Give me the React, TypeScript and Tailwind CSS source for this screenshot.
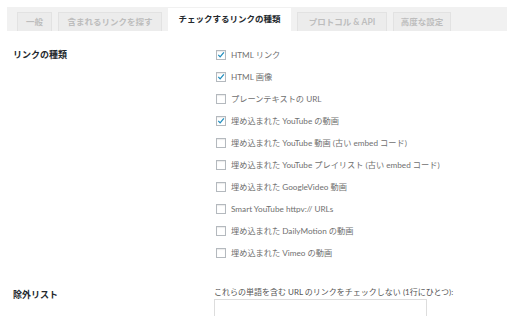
import React from "react";

const tabs = [
  { label: "一般", w: "w-[35px]" },
  { label: "含まれるリンクを探す", w: "w-[104px]" },
  { label: "チェックするリンクの種類", w: "w-[123px]", active: true },
  { label: "プロトコル & API", w: "w-[90px]" },
  { label: "高度な設定", w: "w-[58px]" },
];

const linkTypes = [
  { text: "HTML リンク", checked: true },
  { text: "HTML 画像", checked: true },
  { text: "プレーンテキストの URL", checked: false },
  { text: "埋め込まれた YouTube の動画", checked: true },
  { text: "埋め込まれた YouTube 動画 (古い embed コード)", checked: false },
  { text: "埋め込まれた YouTube プレイリスト (古い embed コード)", checked: false },
  { text: "埋め込まれた GoogleVideo 動画", checked: false },
  { text: "Smart YouTube httpv:// URLs", checked: false },
  { text: "埋め込まれた DailyMotion の動画", checked: false },
  { text: "埋め込まれた Vimeo の動画", checked: false },
];

const CheckBox = ({ checked }: { checked: boolean }) => (
  <span className="flex size-[10px] shrink-0 items-center justify-center border border-[#b4b9be] bg-white shadow-[inset_0_1px_1px_rgba(0,0,0,0.08)]">
    {checked && (
      <svg viewBox="0 0 10 10" className="size-[10px]">
        <path d="M1.6 4.9 L3.9 7.3 L8.6 1.8" fill="none" stroke="#1e8cbe" strokeWidth="1.6" />
      </svg>
    )}
  </span>
);

export default function App() {
  return (
    <div
      className="h-[316px] w-[514px] overflow-hidden bg-white text-[#707070]"
      style={{ fontFamily: 'Lato, "Noto Sans CJK JP", sans-serif' }}
    >
      <div className="px-[7px] pt-[7px]">
        <div className="flex h-[24px] items-end gap-[6px] bg-[#f1f1f1] pl-[10px]">
          {tabs.map((t) =>
            t.active ? (
              <div
                key={t.label}
                className={`flex h-[23px] ${t.w} items-center justify-center bg-white text-[8.5px] font-bold text-[#23282d]`}
              >
                {t.label}
              </div>
            ) : (
              <div
                key={t.label}
                className={`flex h-[19px] ${t.w} items-center justify-center border border-b-0 border-[#e2e2e2] bg-[#ececec] text-[8.5px] font-bold text-[#bdbdbd]`}
              >
                {t.label}
              </div>
            )
          )}
        </div>
      </div>

      <div className="mt-[13px] flex pl-[13px]">
        <div className="w-[202px] shrink-0 pt-[5px] text-[9px] font-bold leading-[12px] text-[#23282d]">
          リンクの種類
        </div>
        <ul className="flex flex-col">
          {linkTypes.map((item) => (
            <li key={item.text} className="flex h-[22px] items-center gap-[5px] pl-[1px]">
              <CheckBox checked={item.checked} />
              <span className="text-[8.2px] leading-[12px]">{item.text}</span>
            </li>
          ))}
        </ul>
      </div>

      <div className="mt-[22px] flex pl-[13px]">
        <div className="w-[201px] shrink-0 pt-[3px] text-[9px] font-bold leading-[12px] text-[#23282d]">
          除外リスト
        </div>
        <div className="flex flex-col">
          <p className="text-[8px] leading-[12px] text-[#555]">
            これらの単語を含む URL のリンクをチェックしない (1行にひとつ):
          </p>
          <textarea className="mt-[1px] h-[40px] w-[213px] resize-none border border-[#dddddd] bg-white" />
        </div>
      </div>
    </div>
  );
}
